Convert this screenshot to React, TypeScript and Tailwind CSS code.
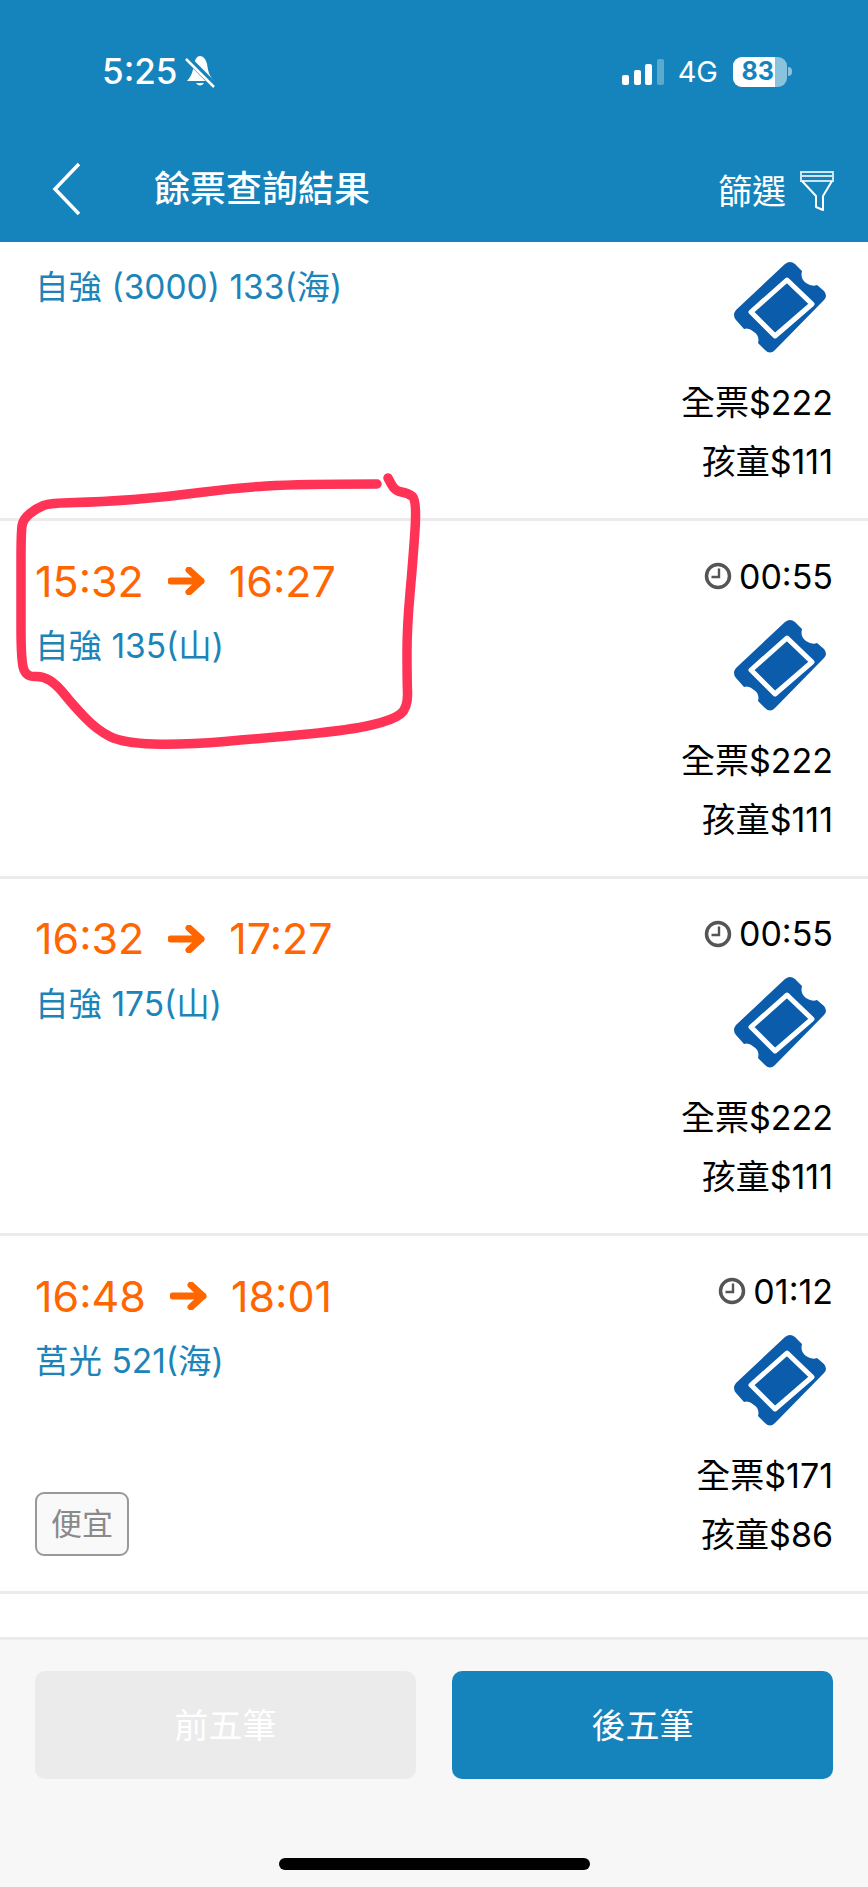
const font = 'font-["Inter","Noto_Sans_CJK_TC",sans-serif]';

const scribble: [number, number][] = [
  [377, 484], [300, 484], [233, 488], [167, 497], [100, 502], [50, 503], [37, 508], [23, 519],
  [21, 533], [21, 593], [21, 663], [27, 677], [43, 676], [57, 685], [73, 705], [97, 730],
  [123, 743], [183, 745], [267, 738], [350, 730], [393, 720], [408, 708], [407, 677], [407, 627],
  [413, 560], [417, 500], [408, 493], [395, 491], [388, 478],
];

// smooth the pen stroke through midpoints
const scribblePath = () => {
  let d = `M${scribble[0][0]} ${scribble[0][1]}`;
  for (let i = 1; i < scribble.length - 1; i++) {
    const [x, y] = scribble[i];
    const [nx, ny] = scribble[i + 1];
    d += ` Q${x} ${y} ${(x + nx) / 2} ${(y + ny) / 2}`;
  }
  const last = scribble[scribble.length - 1];
  return d + ` L${last[0]} ${last[1]}`;
};

const TicketIcon = () => (
  <svg width="92" height="92" viewBox="0 0 92 92" className="mr-[7px] mb-[19px]">
    <path
      d="M51 2 Q56 -2 61 2 L68 9 Q66 17 72 21 Q78 25 83 23 L90 29 Q94 34 90 38 L41 88 Q36 93 31 88 L24 81 Q26 74 20 70 Q15 65 10 67 L2 58 Q-2 53 2 48 Z"
      fill="#0b5cab"
    />
    <path d="M53 18 L78 42 L41 74 L17 50 Z" fill="#0b5cab" stroke="#fff" strokeWidth="5" strokeLinejoin="round" />
  </svg>
);

const ClockIcon = () => (
  <svg width="28" height="28" viewBox="0 0 28 28" className="mr-[7px]">
    <circle cx="14" cy="14" r="11.5" fill="none" stroke="#555" strokeWidth="3.5" />
    <path d="M15 6.5 V15 H7.5" fill="none" stroke="#555" strokeWidth="2.4" />
  </svg>
);

const ArrowIcon = () => (
  <svg width="37" height="28" viewBox="0 0 37 28" className="mx-[24px]">
    <path d="M3 14 H33 M21 3 L33 14 L21 25" fill="none" stroke="#ff6600" strokeWidth="7" strokeLinecap="round" strokeLinejoin="round" />
  </svg>
);

type Train = {
  from?: string;
  to?: string;
  name: string;
  duration?: string;
  full: string;
  child: string;
  tag?: string;
};

const trains: Train[] = [
  { name: '自強 (3000) 133(海)', full: '$222', child: '$111' },
  { from: '15:32', to: '16:27', name: '自強 135(山)', duration: '00:55', full: '$222', child: '$111' },
  { from: '16:32', to: '17:27', name: '自強 175(山)', duration: '00:55', full: '$222', child: '$111' },
  { from: '16:48', to: '18:01', name: '莒光 521(海)', duration: '01:12', full: '$171', child: '$86', tag: '便宜' },
];

const TrainRow = ({ train }: { train: Train }) => (
  <div className={`flex justify-between border-b-[3px] border-[#ebebeb] px-[35px] ${train.from ? 'h-[357.6px]' : 'h-[279px]'}`}>
    <div className="flex flex-col">
      {train.from ? (
        <div className="mt-[37px] flex h-[46px] items-center text-[43px] text-[#ff6600]">
          <span>{train.from}</span>
          <ArrowIcon />
          <span>{train.to}</span>
        </div>
      ) : null}
      <div className={`${train.from ? 'mt-[21px]' : 'mt-[24px]'} h-[42px] text-[33.5px] leading-[42px] text-[#1c84b8]`}>{train.name}</div>
      {train.tag ? (
        <div className="mt-auto mb-[35px] flex h-[64px] w-[94px] items-center justify-center rounded-[9px] border-2 border-[#999] bg-[#f9f9f9] text-[31px] text-[#8a8a8a]">
          {train.tag}
        </div>
      ) : null}
    </div>
    <div className="flex flex-col items-end pb-[27px] text-[34px] text-black">
      {train.duration ? (
        <div className="mt-[35px] flex h-[40px] items-center">
          <ClockIcon />
          <span>{train.duration}</span>
        </div>
      ) : null}
      <div className="mt-auto">
        <TicketIcon />
      </div>
      <div className="h-[59px] leading-[59px]">全票{train.full}</div>
      <div className="h-[59px] leading-[59px]">孩童{train.child}</div>
    </div>
  </div>
);

const App = () => {
  return (
    <div className={`relative flex h-[1887px] w-[868px] flex-col overflow-hidden bg-white ${font}`}>
      {/* Header */}
      <header className="h-[242px] shrink-0 bg-[#1684bc] text-white">
        <div className="flex h-[142px] items-center justify-between pt-[1px] pr-[76px] pl-[102px]">
          <div className="flex items-center">
            <span className="text-[35px] font-medium">5:25</span>
            <svg width="30" height="32" viewBox="0 0 30 32" className="ml-[8px]">
              <path d="M15 0 C18 0 21 3 22 8 C23 14 24 20 29 25 H2 C7 20 8 14 9 8 C10 3 12 0 15 0 Z" fill="#fff" />
              <path d="M11 27 Q15 32 19 27 Z" fill="#fff" />
              <path d="M1 1 L29 29" stroke="#1684bc" strokeWidth="6.5" />
              <path d="M1 3 L29 31" stroke="#fff" strokeWidth="2.5" />
            </svg>
          </div>
          <div className="flex items-center">
            <div className="flex h-[26px] items-end gap-[4.5px]">
              <span className="h-[10px] w-[7px] rounded-[2px] bg-white" />
              <span className="h-[15px] w-[7px] rounded-[2px] bg-white" />
              <span className="h-[21px] w-[7px] rounded-[2px] bg-white" />
              <span className="h-[26px] w-[7px] rounded-[2px] bg-white/30" />
            </div>
            <span className="ml-[14px] text-[29px]">4G</span>
            <div className="ml-[15px] flex items-center">
              <div className="flex h-[30px] w-[54px] overflow-hidden rounded-[9px] bg-white/50">
                <div className="flex h-full w-[42px] items-center justify-end bg-white pr-[1px] text-[25px] font-bold text-[#1684bc]">83</div>
              </div>
              <span className="ml-[1px] h-[9px] w-[4px] rounded-r-full bg-white/50" />
            </div>
          </div>
        </div>
        <div className="flex h-[100px] items-start justify-between pr-[33px] pl-[52px]">
          <div className="flex items-center">
            <svg width="30" height="54" viewBox="0 0 30 54" className="mt-[19px]">
              <path d="M27 2 L3 27 L27 52" fill="none" stroke="#fff" strokeWidth="3.5" />
            </svg>
            <h1 className="mt-[20px] ml-[72px] text-[36px] font-medium">餘票查詢結果</h1>
          </div>
          <div className="mt-[24px] flex items-center">
            <span className="text-[34px]">篩選</span>
            <svg width="36" height="40" viewBox="0 0 36 40" className="mb-[2px] ml-[13px]">
              <path d="M2 1 H34 V10 H2 Z M2 5 H34" fill="none" stroke="#cfe6f2" strokeWidth="2" />
              <path d="M3 10 L17 25 V36 L24 39 V25 L33 10" fill="none" stroke="#fff" strokeWidth="2" strokeLinejoin="round" />
            </svg>
          </div>
        </div>
      </header>

      {/* Results */}
      <main className="h-[1398px] shrink-0 overflow-hidden border-b-[3px] border-[#ebebeb]">
        {trains.map((train) => (
          <TrainRow key={train.name} train={train} />
        ))}
      </main>

      {/* Paging */}
      <footer className="flex flex-1 flex-col bg-[#f7f7f7] px-[35px]">
        <div className="mt-[31px] flex gap-[36px]">
          <button className="h-[108px] flex-1 rounded-[10px] bg-[#ebebeb] text-[34px] text-white">前五筆</button>
          <button className="h-[108px] flex-1 rounded-[10px] bg-[#1684bc] text-[34px] text-white">後五筆</button>
        </div>
        <div className="mx-auto mt-[79px] h-[12px] w-[311px] rounded-full bg-black" />
      </footer>

      {/* Red pen annotation on the screenshot */}
      <svg className="absolute top-0 left-0" width="868" height="1887" viewBox="0 0 868 1887" fill="none">
        <path d={scribblePath()} stroke="#fe3355" strokeWidth="9.5" strokeLinecap="round" strokeLinejoin="round" />
      </svg>
    </div>
  );
};

export default App;
